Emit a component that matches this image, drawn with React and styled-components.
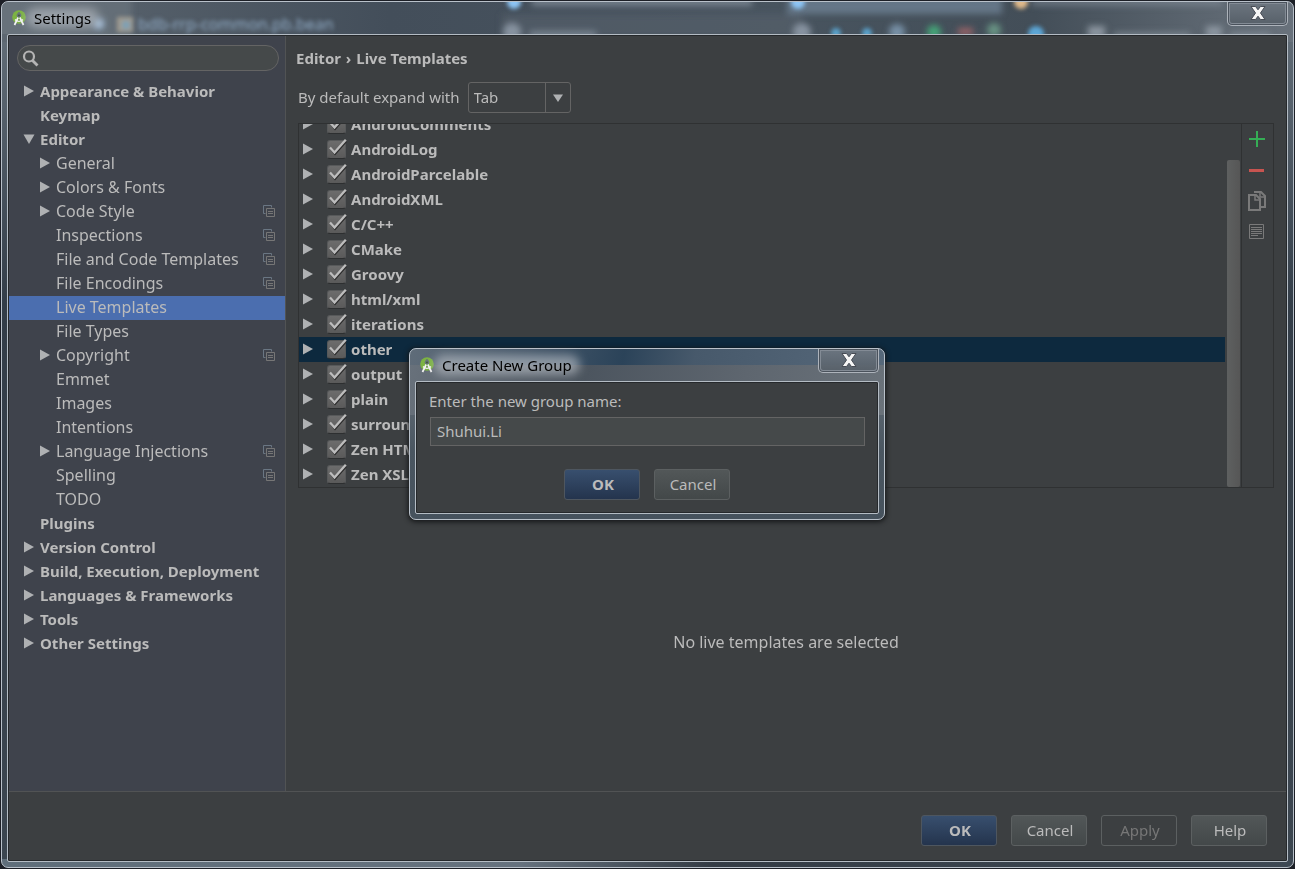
import React, { useState } from 'react';
import styled, { createGlobalStyle, css } from 'styled-components';

const settingsTree = [
  { label: 'Appearance & Behavior', arrow: 'right' },
  { label: 'Keymap' },
  { label: 'Editor', arrow: 'down' },
  { label: 'General', level: 1, arrow: 'right' },
  { label: 'Colors & Fonts', level: 1, arrow: 'right' },
  { label: 'Code Style', level: 1, arrow: 'right', project: true },
  { label: 'Inspections', level: 1, project: true },
  { label: 'File and Code Templates', level: 1, project: true },
  { label: 'File Encodings', level: 1, project: true },
  { label: 'Live Templates', level: 1 },
  { label: 'File Types', level: 1 },
  { label: 'Copyright', level: 1, arrow: 'right', project: true },
  { label: 'Emmet', level: 1 },
  { label: 'Images', level: 1 },
  { label: 'Intentions', level: 1 },
  { label: 'Language Injections', level: 1, arrow: 'right', project: true },
  { label: 'Spelling', level: 1, project: true },
  { label: 'TODO', level: 1 },
  { label: 'Plugins' },
  { label: 'Version Control', arrow: 'right' },
  { label: 'Build, Execution, Deployment', arrow: 'right' },
  { label: 'Languages & Frameworks', arrow: 'right' },
  { label: 'Tools', arrow: 'right' },
  { label: 'Other Settings', arrow: 'right' },
];

const templateGroups = [
  'AndroidComments',
  'AndroidLog',
  'AndroidParcelable',
  'AndroidXML',
  'C/C++',
  'CMake',
  'Groovy',
  'html/xml',
  'iterations',
  'other',
  'output',
  'plain',
  'surround',
  'Zen HTML',
  'Zen XSL',
];

const StudioIcon = () => (
  <svg width="16" height="16" viewBox="0 0 16 16" fill="none" aria-hidden="true">
    <circle cx="8" cy="7" r="6.8" fill="#7cb342" />
    <path d="M4.500 12 8 6l3.500 6z" fill="#5f8f38" />
    <circle cx="8" cy="5.200" r="2.300" fill="#66727a" />
    <path d="M8 2v3" stroke="#66727a" strokeWidth="1.500" />
    <circle cx="8" cy="5.400" r="0.900" fill="#3e5a2c" />
    <path d="M7.200 7.500 3.500 15M8.800 7.500l3.700 7.500" stroke="#f4f4f4" strokeWidth="1.700" />
    <path d="M4 9.500c2.200 2.600 5.800 2.600 8 0" stroke="#f4f4f4" strokeWidth="1.200" />
  </svg>
);

const CloseIcon = () => (
  <svg width="16" height="14" viewBox="0 0 16 14" aria-hidden="true">
    <path
      d="M1 0.500h4.600L8 3.800l2.400-3.300H15L10.500 7l4.500 6.500h-4.600L8 10.200l-2.400 3.300H1L5.500 7z"
      fill="#f6f6f6"
      stroke="#474c55"
      strokeWidth="1"
    />
  </svg>
);

const arrowPaths = {
  right: 'M1 0.500v11l10-5.500z',
  down: 'M0.500 1.500h11L6 11z',
  select: 'M1 2.500h10L6 10z',
};

const ArrowIcon = ({ direction }) => (
  <svg width="12" height="12" viewBox="0 0 12 12" aria-hidden="true">
    {direction && <path d={arrowPaths[direction]} fill="#afb1b3" />}
  </svg>
);

const ProjectIcon = () => (
  <svg width="12" height="12" viewBox="0 0 12 12" fill="none" aria-hidden="true">
    <path d="M2.500 8.500h-2v-8h8v2" stroke="#6a7683" />
    <path d="M3.500 3.500h8v8h-8z" stroke="#767676" />
    <path d="M5 6.500h5M5 8.500h5" stroke="#767676" />
  </svg>
);

const SearchIcon = () => (
  <svg width="17" height="17" viewBox="0 0 17 17" fill="none" aria-hidden="true">
    <circle cx="7" cy="6.500" r="5" stroke="#b4b4b4" strokeWidth="2.200" />
    <path d="m10.500 10.500 5 5" stroke="#b4b4b4" strokeWidth="2.800" />
  </svg>
);

const CheckIcon = () => (
  <svg width="20" height="18" viewBox="0 0 20 18" fill="none" aria-hidden="true">
    <path d="m4 10 4 5L19 2.500" stroke="#2b2b2b" strokeWidth="2" />
    <path d="m3 8.500 4.500 5L18.800 0.800" stroke="#bdbdbd" strokeWidth="2.300" />
  </svg>
);

const AddIcon = () => (
  <svg width="16" height="16" viewBox="0 0 16 16" aria-hidden="true">
    <path d="M7 0h2v7h7v2H9v7H7V9H0V7h7z" fill="#35ad55" />
  </svg>
);

const RemoveIcon = () => (
  <svg width="16" height="16" viewBox="0 0 16 16" aria-hidden="true">
    <path d="M0 7h15v3H0z" fill="#c75450" />
  </svg>
);

const CopyIcon = () => (
  <svg width="20" height="20" viewBox="0 0 20 20" fill="none" stroke="#7a7a7a" aria-hidden="true">
    <path d="M7 1h7l4 4v11h-4" strokeWidth="2" />
    <path d="M2 4h7l4 4v11H2z" strokeWidth="2" />
    <path d="M8 4v5h5M13 1v5h5" strokeWidth="1.500" />
  </svg>
);

const NoteIcon = () => (
  <svg width="16" height="16" viewBox="0 0 16 16" fill="none" stroke="#7a7a7a" aria-hidden="true">
    <path d="M0.500 0.500h14v14h-14z" />
    <path d="M2 3.500h11M2 5.500h11M2 7.500h11M2 9.500h11M2 11.500h7" />
  </svg>
);

// What shows through the glass title bar: tabs and toolbar of the window behind
const GlassBackdrop = () => (
  <Backdrop aria-hidden="true">
    <defs>
      <filter id="glass" x="-20%" y="-50%" width="140%" height="200%">
        <feGaussianBlur stdDeviation="3" />
      </filter>
      <filter id="tabs" x="-20%" y="-50%" width="140%" height="200%">
        <feGaussianBlur stdDeviation="2" />
      </filter>
    </defs>
    <g filter="url(#glass)">
      <rect x="-10" y="-8" width="140" height="50" fill="#7b848d" opacity="0.4" />
      <rect x="500" y="12" width="300" height="24" fill="#59646e" opacity="0.5" />
      <rect x="785" y="-6" width="215" height="18" fill="#72869a" opacity="0.7" />
      <rect x="530" y="-4" width="220" height="8" fill="#8994a1" opacity="0.7" />
      <rect x="1030" y="-4" width="190" height="8" fill="#8994a1" opacity="0.5" />
      <circle cx="97" cy="22" r="5" fill="#a9c3de" />
      <circle cx="510" cy="30" r="9" fill="#8793a0" />
      <rect x="528" y="29" width="66" height="8" fill="#8793a0" opacity="0.7" />
      <circle cx="800" cy="30" r="9" fill="#8793a0" />
      <circle cx="895" cy="30" r="8" fill="#7790a6" />
      <circle cx="932" cy="30" r="7" fill="#45a578" />
      <rect x="956" y="26" width="15" height="7" fill="#9a6468" />
      <circle cx="992" cy="28" r="7" fill="#679283" />
      <rect x="1086" y="24" width="17" height="12" fill="#8a949f" />
      <rect x="1112" y="30" width="76" height="7" fill="#8a949f" opacity="0.6" />
      <rect x="1204" y="24" width="16" height="12" fill="#8a949f" />
      <rect x="1228" y="30" width="40" height="7" fill="#8a949f" opacity="0.6" />
    </g>
    <g filter="url(#tabs)">
      <rect x="115" y="15" width="16" height="15" fill="#a09b90" />
      <rect x="120" y="19" width="8" height="8" fill="#7fa0b4" />
      <text x="136" y="28" fontSize="16" fill="#93aec8">bdb-rrp-common.pb.bean</text>
      <circle cx="512" cy="0" r="7" fill="#8cc4f4" />
      <circle cx="796" cy="0" r="7" fill="#8cc4f4" />
      <circle cx="1019" cy="0" r="7" fill="#dfb98a" />
      <circle cx="834" cy="31" r="5" fill="#5aa3cc" />
      <circle cx="865" cy="31" r="5" fill="#5aa3cc" />
      <circle cx="1034" cy="32" r="8" fill="#5ba6d6" />
    </g>
  </Backdrop>
);

const App = () => {
  const [checked, setChecked] = useState(() => templateGroups.map(() => true));
  const [groupName, setGroupName] = useState('Shuhui.Li');

  const toggle = (index) =>
    setChecked((prev) => prev.map((value, i) => (i === index ? !value : value)));

  return (
    <>
      <GlobalStyle />
      <Window>
        <GlassBackdrop />
        <TitleBar>
          <StudioIcon />
          <Title>Settings</Title>
          <WindowClose aria-label="Close settings">
            <CloseIcon />
          </WindowClose>
        </TitleBar>

        <Client>
          <Body>
            <Sidebar>
              <SearchField>
                <SearchIcon />
                <SearchInput type="text" aria-label="Search settings" />
              </SearchField>
              <Tree>
                {settingsTree.map((item) => (
                  <TreeItem
                    key={item.label}
                    $level={item.level}
                    $selected={item.label === 'Live Templates'}
                  >
                    <ArrowIcon direction={item.arrow} />
                    <TreeLabel>{item.label}</TreeLabel>
                    {item.project && <ProjectIcon />}
                  </TreeItem>
                ))}
              </Tree>
            </Sidebar>

            <Main>
              <Heading>
                Editor <Crumb>›</Crumb> Live Templates
              </Heading>
              <ExpandRow>
                <ExpandLabel htmlFor="expand">By default expand with</ExpandLabel>
                <SelectBox>
                  <Select id="expand" defaultValue="Tab">
                    <option>Tab</option>
                    <option>Enter</option>
                    <option>Space</option>
                  </Select>
                  <SelectArrow>
                    <ArrowIcon direction="select" />
                  </SelectArrow>
                </SelectBox>
              </ExpandRow>

              <ListPanel>
                <GroupList>
                  {templateGroups.map((group, index) => (
                    <GroupRow key={group} $selected={group === 'other'}>
                      <ArrowIcon direction="right" />
                      <GroupLabel>
                        <CheckBox>
                          <CheckInput
                            type="checkbox"
                            checked={checked[index]}
                            onChange={() => toggle(index)}
                          />
                          {checked[index] && <CheckIcon />}
                        </CheckBox>
                        {group}
                      </GroupLabel>
                    </GroupRow>
                  ))}
                </GroupList>
                <ScrollTrack>
                  <ScrollThumb />
                </ScrollTrack>
                <Toolbar>
                  <ToolButton aria-label="Add"><AddIcon /></ToolButton>
                  <ToolButton aria-label="Remove"><RemoveIcon /></ToolButton>
                  <ToolButton aria-label="Duplicate"><CopyIcon /></ToolButton>
                  <ToolButton aria-label="Restore defaults"><NoteIcon /></ToolButton>
                </Toolbar>
              </ListPanel>

              <EmptyState>No live templates are selected</EmptyState>
            </Main>
          </Body>

          <Footer>
            <Button $primary>OK</Button>
            <Button>Cancel</Button>
            <Button disabled>Apply</Button>
            <Button>Help</Button>
          </Footer>
        </Client>
      </Window>

      <Overlay>
        <Dialog role="dialog" aria-label="Create New Group">
          <TitleBar>
            <StudioIcon />
            <Title>Create New Group</Title>
            <WindowClose aria-label="Close dialog">
              <CloseIcon />
            </WindowClose>
          </TitleBar>
          <DialogClient>
            <label htmlFor="group-name">Enter the new group name:</label>
            <NameInput
              id="group-name"
              type="text"
              value={groupName}
              onChange={(e) => setGroupName(e.target.value)}
            />
            <DialogButtons>
              <Button $primary>OK</Button>
              <Button>Cancel</Button>
            </DialogButtons>
          </DialogClient>
        </Dialog>
      </Overlay>
    </>
  );
};

export default App;

const GlobalStyle = createGlobalStyle`
  * {
    box-sizing: border-box;
  }

  body {
    margin: 0;
    padding: 1px;
    background: #1c1f26;
    color: #bbbbbb;
    font-family: 'Noto Sans', 'Open Sans', sans-serif;
    font-size: 15px;
    line-height: 24px;
  }

  button, input, select {
    font: inherit;
    color: inherit;
  }

  svg {
    flex: none;
  }
`;

const glassFrame = css`
  display: flex;
  flex-direction: column;
  padding: 0 5px 5px;
  border: 1px solid #b9c1ca;
  border-radius: 7px;
`;

const Window = styled.div`
  ${glassFrame}
  position: relative;
  height: calc(100vh - 2px);
  background:
    linear-gradient(90deg, #5d6771, #434e5a 30%, #48545f 60%, #434e58 80%, #69727c) top / 100% 40px no-repeat,
    linear-gradient(90deg, #5f6e7a, #66727e 40%, #343c45 55%, #3d4853) bottom / 100% 8px no-repeat,
    linear-gradient(#66717b, #56616c 12%, #333d48 35%, #3c4650);
`;

const Backdrop = styled.svg`
  position: absolute;
  top: 0;
  left: 0;
  width: 100%;
  height: 32px;
  border-radius: 6px 6px 0 0;
`;

const TitleBar = styled.header`
  position: relative;
  display: flex;
  align-items: center;
  gap: 7px;
  height: 32px;
  padding-left: 4px;
`;

const Title = styled.span`
  position: relative;
  color: #000000;
  z-index: 0;

  /* soft glow behind the caption */
  &::before {
    content: '';
    position: absolute;
    inset: 2px -8px;
    z-index: -1;
    border-radius: 10px;
    background: rgba(190, 195, 202, 0.6);
    filter: blur(5px);
  }
`;

const WindowClose = styled.button`
  display: grid;
  place-items: center;
  align-self: flex-start;
  width: 61px;
  height: 24px;
  margin-left: auto;
  padding: 0 0 2px;
  border: 1px solid #adb3bb;
  border-top: none;
  border-radius: 0 0 5px 5px;
  background: linear-gradient(rgba(110, 119, 129, 0.9), rgba(85, 94, 103, 0.9));
  box-shadow: inset 0 0 0 1px #4a525c, inset 0 0 0 2px #838b95;
`;

const Client = styled.div`
  flex: 1;
  display: flex;
  flex-direction: column;
  min-height: 0;
  position: relative;
  border: 1px solid #b4bcc4;
  border-radius: 2px;
  background: #3c3f41;
  box-shadow: inset 0 0 0 1px #25282b;
  padding: 1px;
`;

const Body = styled.div`
  flex: 1;
  display: flex;
  min-height: 0;
`;

const Sidebar = styled.nav`
  width: 277px;
  flex: none;
  padding-top: 9px;
  border-right: 1px solid #515354;
  background: #3f434c;
`;

const SearchField = styled.div`
  display: flex;
  align-items: center;
  gap: 4px;
  height: 26px;
  margin: 0 6px 9px 8px;
  padding: 0 12px 0 4px;
  border: 1px solid #646464;
  border-radius: 13px;
  background: #45494a;
`;

const SearchInput = styled.input`
  flex: 1;
  min-width: 0;
  border: none;
  outline: none;
  background: transparent;
`;

const Tree = styled.ul`
  margin: 0;
  padding: 0;
  list-style: none;
`;

const TreeItem = styled.li`
  display: flex;
  align-items: center;
  gap: 5px;
  height: 24px;
  padding: 0 10px 2px ${({ $level }) => ($level ? 30 : 14)}px;
  font-size: ${({ $level }) => ($level ? 16 : 15)}px;
  font-weight: ${({ $level }) => ($level ? 400 : 700)};
  background: ${({ $selected }) => ($selected ? '#4b6eaf' : 'transparent')};
`;

const TreeLabel = styled.span`
  flex: 1;
  white-space: nowrap;
`;

const Main = styled.main`
  flex: 1;
  display: flex;
  flex-direction: column;
  min-width: 0;
  padding: 10px 12px 0;
`;

const Heading = styled.h1`
  margin: 0 -2px 12px;
  font-size: 15px;
  font-weight: 700;
`;

const Crumb = styled.span`
  margin: 0 1px;
`;

const ExpandRow = styled.div`
  display: flex;
  align-items: center;
  gap: 8px;
  margin-bottom: 10px;
`;

const ExpandLabel = styled.label`
  padding-bottom: 2px;
`;

const SelectBox = styled.div`
  position: relative;
  width: 103px;
  height: 31px;
  border: 1px solid #646464;
  border-radius: 3px;
`;

const Select = styled.select`
  appearance: none;
  width: 100%;
  height: 100%;
  padding: 0 30px 2px 5px;
  border: none;
  outline: none;
  background: transparent;
`;

const SelectArrow = styled.span`
  position: absolute;
  top: 0;
  right: 0;
  bottom: 0;
  display: grid;
  place-items: center;
  width: 25px;
  border-left: 1px solid #646464;
  pointer-events: none;
`;

const ListPanel = styled.section`
  display: flex;
  height: 365px;
  border: 1px solid #2f3132;
`;

/* The list is scrolled to its end, so the first row is cut at the top */
const GroupList = styled.ul`
  flex: 1;
  display: flex;
  flex-direction: column;
  justify-content: flex-end;
  margin: 0;
  padding: 0;
  overflow: hidden;
  list-style: none;
`;

const GroupRow = styled.li`
  flex: none;
  display: flex;
  align-items: center;
  gap: 13px;
  height: 25px;
  padding: 0 0 2px 3px;
  font-weight: 700;
  background: ${({ $selected }) => ($selected ? '#0d293e' : 'transparent')};
`;

const GroupLabel = styled.label`
  display: flex;
  align-items: center;
  gap: 5px;
`;

const CheckBox = styled.span`
  position: relative;
  display: flex;
  margin-top: 2px;

  svg {
    position: absolute;
    top: -1px;
    left: 0;
    pointer-events: none;
  }
`;

const CheckInput = styled.input`
  appearance: none;
  width: 19px;
  height: 19px;
  margin: 0;
  border: 1px solid #57595a;
  border-bottom-color: #2d2f30;
  border-radius: 3px;
  background: linear-gradient(#6c6c6c, #5a5a5a);
`;

const ScrollTrack = styled.div`
  display: flex;
  align-items: flex-end;
  width: 16px;
  padding-left: 2px;
`;

const ScrollThumb = styled.div`
  width: 13px;
  height: 90%;
  border-radius: 2px;
  background: linear-gradient(90deg, #5e6060, #565656);
`;

const Toolbar = styled.div`
  display: flex;
  flex-direction: column;
  width: 32px;
  border-left: 1px solid #2f3132;
`;

const ToolButton = styled.button`
  display: grid;
  place-items: center;
  width: 30px;
  height: 31px;
  padding: 0 0 2px;
  border: none;
  background: none;
`;

const EmptyState = styled.p`
  flex: 1;
  display: grid;
  place-items: center;
  margin: 0;
  padding-top: 4px;
  font-size: 16px;
`;

const Footer = styled.footer`
  display: flex;
  justify-content: flex-end;
  gap: 14px;
  padding: 23px 19px 14px;
  border-top: 1px solid #515354;
`;

const Button = styled.button`
  width: 76px;
  height: 31px;
  padding: 0 0 2px 2px;
  border: 1px solid #5c6061;
  border-radius: 3px;
  background: linear-gradient(#525758, #434849);

  ${({ $primary }) =>
    $primary &&
    css`
      border-color: #4e565f;
      background: linear-gradient(#384f6e, #24344d);
      font-weight: 700;
    `}

  &:disabled {
    background: none;
    color: #777777;
  }
`;

const Overlay = styled.div`
  position: fixed;
  inset: 0 1px 1px 0;
  display: flex;
  align-items: center;
  justify-content: center;
`;

const Dialog = styled.div`
  ${glassFrame}
  width: 476px;
  background:
    linear-gradient(100deg, #5f6c79, #46586a 25%, #2b4359 45%, #47596b 60%, #56687a) top / 100% 16px no-repeat,
    linear-gradient(100deg, #68717b, #4b545e 35%, #5e666f 70%, #6a727a) 0 16px / 100% 50px no-repeat,
    linear-gradient(#6d767f, #4a5661 60%, #46525d);
  box-shadow: 0 1px 5px 1px #151719;
`;

const DialogClient = styled(Client)`
  padding: 7px 13px 13px;
`;

const NameInput = styled.input`
  height: 29px;
  margin: 4px 0 0 1px;
  padding: 0 6px 2px;
  border: 1px solid #646464;
  outline: none;
  background: #45494a;
`;

const DialogButtons = styled.div`
  display: flex;
  justify-content: center;
  gap: 14px;
  margin-top: 23px;
`;
